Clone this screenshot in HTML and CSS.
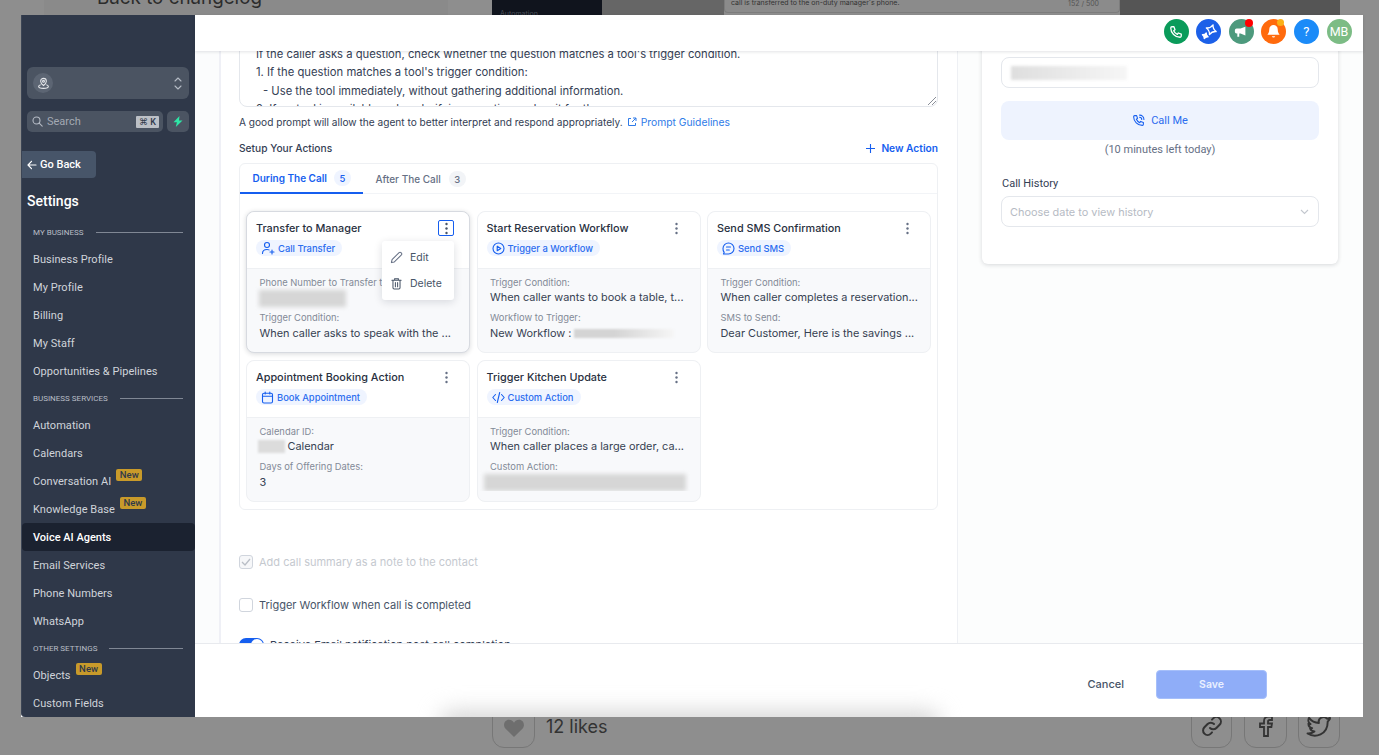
FILE: index.html
```html
<!DOCTYPE html>
<html lang="en">
<head>
<meta charset="utf-8">
<title>Voice AI Agents</title>
<link rel="stylesheet" href="styles.css">
</head>
<body>
<div class="bg">
  <div class="bg-a"></div>
  <div class="bg-img"><span>Automation</span></div>
  <div class="bg-b"></div>
  <div class="bg-c"><span>call is transferred to the on-duty manager's phone.</span><em>152 / 500</em></div>
  <div class="bg-d"></div>
  <div class="bg-back">Back to changelog</div>
  <div class="bg-btn bg-like"><svg width="22" height="20" viewBox="0 0 24 22"><path d="M12 21 2.5 11.5C-.5 8 1.5 2 6.5 2c2.500 0 4.300 1.300 5.500 3.200C13.200 3.300 15 2 17.500 2c5 0 7 6 4 9.500z" fill="#6e6e6e"/></svg></div>
  <div class="bg-likes">12 likes</div>
  <div class="bg-btn bg-s1"><svg width="24" height="24" viewBox="0 0 24 24" fill="none" stroke="#333" stroke-width="2" stroke-linecap="round"><path d="M10 14a4.500 4.500 0 0 0 6.400 0l3.200-3.200a4.500 4.500 0 0 0-6.400-6.400l-1.200 1.200"/><path d="M14 10a4.500 4.500 0 0 0-6.400 0l-3.200 3.200a4.500 4.500 0 0 0 6.400 6.400l1.200-1.200"/></svg></div>
  <div class="bg-btn bg-s2"><svg width="16" height="24" viewBox="0 0 16 24" fill="none" stroke="#333" stroke-width="1.800"><path d="M6 22v-9H2V9.500h4V7c0-3 1.800-4.500 4.500-4.500H14V6h-2.300C10.500 6 10 6.600 10 7.700v1.800h4l-.6 3.500H10v9z"/></svg></div>
  <div class="bg-btn bg-s3"><svg width="28" height="24" viewBox="0 0 24 22" fill="none" stroke="#333" stroke-width="1.800" stroke-linejoin="round"><path d="M22 3.500c-1 .5-1.800.7-2.700.8a4.300 4.300 0 0 0-7.400 3.900C8.300 8 5 6.300 2.900 3.500c-1.200 2-.6 4.600 1.300 5.800-.7 0-1.300-.2-1.900-.5 0 2 1.400 3.800 3.400 4.200-.6.200-1.300.2-1.900.1.500 1.700 2.100 2.900 4 3-1.800 1.400-4 2-6.300 1.800 7 4.300 18.500 1.500 18.500-11 .9-.7 1.500-1.400 2-2.400z"/></svg></div>
</div>

<div class="window">
  <aside class="sidebar">
    <div class="switcher">
      <span class="loc"><svg width="13" height="13" viewBox="0 0 16 16" fill="none" stroke="#e5e7eb" stroke-width="1.300"><path d="M8 10.500S4.500 7.800 4.500 5.200a3.500 3.500 0 0 1 7 0C11.500 7.800 8 10.500 8 10.500z"/><circle cx="8" cy="5.200" r="1.200"/><path d="M4.500 9.500C3 10 2 10.800 2 11.700 2 13 4.700 14 8 14s6-1 6-2.300c0-.9-1-1.700-2.500-2.200"/></svg></span>
      <svg class="updown" width="8" height="13" viewBox="0 0 8 13" fill="none" stroke="#b4bac4" stroke-width="1.100" stroke-linecap="round" stroke-linejoin="round"><path d="M1 4l3-3 3 3M1 9l3 3 3-3"/></svg>
    </div>
    <div class="search-row">
      <div class="search">
        <svg width="11" height="11" viewBox="0 0 11 11" fill="none" stroke="#b4bac4" stroke-width="1.100" stroke-linecap="round"><circle cx="4.500" cy="4.500" r="3.500"/><path d="M7.200 7.200 10.200 10.200"/></svg>
        <span class="search-text">Search</span>
        <span class="kbd">⌘ K</span>
      </div>
      <div class="bolt"><svg width="10" height="11" viewBox="0 0 10 11"><path d="M6.500 0 .5 6.200h3.400L2.800 11 9.500 4.500H6z" fill="#2ee6a6"/></svg></div>
    </div>
    <div class="goback"><svg width="10" height="10" viewBox="0 0 10 10" fill="none" stroke="#fff" stroke-width="1.200" stroke-linecap="round" stroke-linejoin="round"><path d="M9 5H1M4.500 1.300 1 5l3.500 3.700"/></svg>Go Back</div>
    <div class="settings">Settings</div>
    <div class="sec"><span>MY BUSINESS</span><i></i></div>
    <div class="item">Business Profile</div>
    <div class="item">My Profile</div>
    <div class="item">Billing</div>
    <div class="item">My Staff</div>
    <div class="item">Opportunities &amp; Pipelines</div>
    <div class="sec"><span>BUSINESS SERVICES</span><i></i></div>
    <div class="item">Automation</div>
    <div class="item">Calendars</div>
    <div class="item">Conversation AI<b class="new">New</b></div>
    <div class="item">Knowledge Base<b class="new">New</b></div>
    <div class="item active">Voice AI Agents</div>
    <div class="item">Email Services</div>
    <div class="item">Phone Numbers</div>
    <div class="item">WhatsApp</div>
    <div class="sec"><span>OTHER SETTINGS</span><i></i></div>
    <div class="item">Objects<b class="new">New</b></div>
    <div class="item">Custom Fields</div>
  </aside>

  <div class="main">
    <header class="topbar">
      <span class="tb tb-green"><svg width="14" height="14" viewBox="0 0 24 24" fill="none" stroke="#fff" stroke-width="2.200" stroke-linejoin="round"><path d="M5 3h3.500l1.800 5-2.300 1.700a13 13 0 0 0 6.300 6.300l1.700-2.300 5 1.800V19a2 2 0 0 1-2 2C10.500 21 3 13.500 3 5a2 2 0 0 1 2-2z"/></svg></span>
      <span class="tb tb-blue"><svg width="18" height="18" viewBox="0 0 24 24" fill="none" stroke="#fff" stroke-width="1.700" stroke-linejoin="round"><path d="M15 2Q16.500 7.500 22 9 16.500 10.500 15 16 13.500 10.500 8 9 13.500 7.500 15 2z" transform="rotate(20 15 9)"/><path d="M7 13Q7.800 16.200 11 17 7.800 17.800 7 21 6.200 17.800 3 17 6.200 16.200 7 13z" fill="#fff" transform="rotate(20 7 17)"/></svg></span>
      <span class="tb tb-teal"><svg width="14" height="14" viewBox="0 0 16 16"><path d="M13 2v10L7.500 9.800H6v3.700H3.800V9.800H3a2 2 0 0 1-2-2V6a2 2 0 0 1 2-2h4.500z" fill="#fff"/></svg><i class="dot dot-red"></i></span>
      <span class="tb tb-orange"><svg width="15" height="15" viewBox="0 0 16 16"><path d="M8 1a4.500 4.500 0 0 0-4.500 4.500c0 3.500-1.500 5-2 6h13c-.5-1-2-2.500-2-6A4.500 4.500 0 0 0 8 1z" fill="#fff"/><path d="M6.200 13a1.900 1.900 0 0 0 3.600 0z" fill="#fff"/></svg><i class="dot dot-amber"></i></span>
      <span class="tb tb-help">?</span>
      <span class="tb tb-user">MB</span>
    </header>

    <div class="body">
      <div class="gutter"></div>
      <section class="left">
        <div class="prompt">
          <p>If the caller asks a question, check whether the question matches a tool's trigger condition.</p>
          <p>1. If the question matches a tool's trigger condition:</p>
          <p class="indent">- Use the tool immediately, without gathering additional information.</p>
          <p>2. If no tool is available, ask a clarifying question and wait for the response.</p>
          <svg class="grip" width="8" height="8" viewBox="0 0 8 8" stroke="#8a8f98" stroke-width="1"><path d="M8 0 0 8M8 4 4 8"/></svg>
        </div>
        <p class="hint">A good prompt will allow the agent to better interpret and respond appropriately.<span class="guide"><svg width="10" height="10" viewBox="0 0 10 10" fill="none" stroke="#2f7be8" stroke-width="1"><path d="M4 1.500H1.500v7h7V6M6 1h3v3M9 1 5 5"/></svg>Prompt Guidelines</span></p>
        <div class="setup"><span>Setup Your Actions</span><span class="newact"><svg width="9" height="9" viewBox="0 0 9 9" stroke="#155eef" stroke-width="1.100"><path d="M4.500 0v9M0 4.500h9"/></svg>New Action</span></div>

        <div class="tabs">
          <div class="tabhead">
            <div class="tab on">During The Call<span class="count">5</span></div>
            <div class="tab">After The Call<span class="count">3</span></div>
          </div>
          <div class="grid">
            <article class="card selected">
              <div class="chead">
                <div class="ctop"><span class="ctitle">Transfer to Manager</span><span class="kebab focus"><svg width="3" height="13" viewBox="0 0 3 13" fill="#475467"><circle cx="1.500" cy="2" r="1.200"/><circle cx="1.500" cy="6.500" r="1.200"/><circle cx="1.500" cy="11" r="1.200"/></svg></span></div>
                <span class="pill"><svg width="14" height="14" viewBox="0 0 14 14" fill="none" stroke="#155eef" stroke-width="1.100" stroke-linecap="round"><circle cx="6" cy="4" r="2.500"/><path d="M1.500 12.500c0-2.500 2-4 4.500-4 .8 0 1.500.1 2 .4M11 9v4M9 11h4"/></svg>Call Transfer</span>
              </div>
              <div class="cbody">
                <label>Phone Number to Transfer to</label>
                <div class="smudge s-phone"></div>
                <label class="second">Trigger Condition:</label>
                <div class="val">When caller asks to speak with the ...</div>
              </div>
              <div class="menu">
                <div class="mi"><svg width="13" height="13" viewBox="0 0 14 14" fill="none" stroke="#667085" stroke-width="1.100" stroke-linejoin="round"><path d="M1.500 12.500l.7-3.200 7.600-7.600a1.400 1.400 0 0 1 2 0l.5.500a1.400 1.400 0 0 1 0 2l-7.600 7.600z"/></svg>Edit</div>
                <div class="mi"><svg width="13" height="13" viewBox="0 0 14 14" fill="none" stroke="#475467" stroke-width="1.100" stroke-linecap="round"><path d="M2 3.500h10M5 3.500V2h4v1.500M3.200 3.500v8a1.300 1.300 0 0 0 1.300 1.300h5a1.300 1.300 0 0 0 1.300-1.300v-8M5.800 6v4.500M8.200 6v4.500"/></svg>Delete</div>
              </div>
            </article>

            <article class="card">
              <div class="chead">
                <div class="ctop"><span class="ctitle">Start Reservation Workflow</span><span class="kebab"><svg width="3" height="13" viewBox="0 0 3 13" fill="#667085"><circle cx="1.500" cy="2" r="1.200"/><circle cx="1.500" cy="6.500" r="1.200"/><circle cx="1.500" cy="11" r="1.200"/></svg></span></div>
                <span class="pill"><svg width="13" height="13" viewBox="0 0 13 13" fill="none" stroke="#155eef" stroke-width="1.100" stroke-linejoin="round"><circle cx="6.500" cy="6.500" r="5.500"/><path d="M5.200 4.200v4.600l3.600-2.300z"/></svg>Trigger a Workflow</span>
              </div>
              <div class="cbody">
                <label>Trigger Condition:</label>
                <div class="val">When caller wants to book a table, t...</div>
                <label class="second">Workflow to Trigger:</label>
                <div class="val vflex">New Workflow :<span class="smudge s-flow"></span></div>
              </div>
            </article>

            <article class="card">
              <div class="chead">
                <div class="ctop"><span class="ctitle">Send SMS Confirmation</span><span class="kebab"><svg width="3" height="13" viewBox="0 0 3 13" fill="#667085"><circle cx="1.500" cy="2" r="1.200"/><circle cx="1.500" cy="6.500" r="1.200"/><circle cx="1.500" cy="11" r="1.200"/></svg></span></div>
                <span class="pill"><svg width="13" height="13" viewBox="0 0 13 13" fill="none" stroke="#155eef" stroke-width="1.100" stroke-linecap="round" stroke-linejoin="round"><path d="M1 6.500a5.500 5.500 0 1 1 5.500 5.500H1.500l.7-1.700A5.400 5.400 0 0 1 1 6.500zM4.500 5h4M4.500 8h2.800"/></svg>Send SMS</span>
              </div>
              <div class="cbody">
                <label>Trigger Condition:</label>
                <div class="val">When caller completes a reservation...</div>
                <label class="second">SMS to Send:</label>
                <div class="val">Dear Customer, Here is the savings ...</div>
              </div>
            </article>

            <article class="card">
              <div class="chead">
                <div class="ctop"><span class="ctitle">Appointment Booking Action</span><span class="kebab"><svg width="3" height="13" viewBox="0 0 3 13" fill="#667085"><circle cx="1.500" cy="2" r="1.200"/><circle cx="1.500" cy="6.500" r="1.200"/><circle cx="1.500" cy="11" r="1.200"/></svg></span></div>
                <span class="pill"><svg width="13" height="13" viewBox="0 0 13 13" fill="none" stroke="#155eef" stroke-width="1.100" stroke-linecap="round"><rect x="1.500" y="2.200" width="10" height="9.800" rx="1.500"/><path d="M1.500 5.200h10M4.200 1v2M8.800 1v2"/></svg>Book Appointment</span>
              </div>
              <div class="cbody">
                <label>Calendar ID:</label>
                <div class="val vflex"><span class="smudge s-cal"></span>Calendar</div>
                <label class="second">Days of Offering Dates:</label>
                <div class="val">3</div>
              </div>
            </article>

            <article class="card">
              <div class="chead">
                <div class="ctop"><span class="ctitle">Trigger Kitchen Update</span><span class="kebab"><svg width="3" height="13" viewBox="0 0 3 13" fill="#667085"><circle cx="1.500" cy="2" r="1.200"/><circle cx="1.500" cy="6.500" r="1.200"/><circle cx="1.500" cy="11" r="1.200"/></svg></span></div>
                <span class="pill"><svg width="13" height="13" viewBox="0 0 13 13" fill="none" stroke="#155eef" stroke-width="1.100" stroke-linecap="round" stroke-linejoin="round"><path d="M3.500 3.500.8 6.500l2.700 3M9.500 3.500l2.700 3-2.700 3M7.700 1.500l-2.400 10"/></svg>Custom Action</span>
              </div>
              <div class="cbody">
                <label>Trigger Condition:</label>
                <div class="val">When caller places a large order, ca...</div>
                <label class="second">Custom Action:</label>
                <div class="smudge s-custom"></div>
              </div>
            </article>
          </div>
        </div>

        <div class="check disabled"><span class="box"><svg width="10" height="8" viewBox="0 0 10 8" fill="none" stroke="#b9bec6" stroke-width="1.300"><path d="M1 4l3 3 5-6"/></svg></span>Add call summary as a note to the contact</div>
        <div class="check trigger"><span class="box"></span>Trigger Workflow when call is completed</div>
        <div class="check notif"><span class="toggle"><i></i></span>Receive Email notification post call completion</div>
      </section>

      <section class="right">
        <div class="rcard">
          <div class="field"><span class="smudge s-input"></span></div>
          <div class="callme"><svg width="13" height="13" viewBox="0 0 24 24" fill="none" stroke="#155eef" stroke-width="2" stroke-linejoin="round" stroke-linecap="round"><path d="M5 3h3.500l1.800 5-2.300 1.700a13 13 0 0 0 6.300 6.300l1.700-2.300 5 1.800V19a2 2 0 0 1-2 2C10.500 21 3 13.500 3 5a2 2 0 0 1 2-2z"/><path d="M14 2a8 8 0 0 1 8 8M14 6a4 4 0 0 1 4 4"/></svg>Call Me</div>
          <div class="left-time">(10 minutes left today)</div>
          <div class="hist">Call History</div>
          <div class="select"><span>Choose date to view history</span><svg width="9" height="6" viewBox="0 0 9 6" fill="none" stroke="#c3c7ce" stroke-width="1.100"><path d="M1 1l3.500 3.500L8 1"/></svg></div>
        </div>
      </section>
    </div>

    <footer class="footer">
      <div class="glow"></div>
      <span class="cancel">Cancel</span>
      <span class="save">Save</span>
    </footer>
  </div>
</div>
</body>
</html>
```
FILE: styles.css
```css
* { box-sizing: border-box; }
html, body { margin: 0; height: 100%; }
body { width: 1379px; height: 755px; overflow: hidden; background: #8e8e8e; font-family: Inter, "Liberation Sans", sans-serif; position: relative; }
p { margin: 0; }

/* dimmed page behind the modal */
.bg > div { position: absolute; }
.bg-a { left: 44px; top: 0; width: 404px; height: 15px; background: #8a8a8a; }
.bg-img { left: 492px; top: 0; width: 110px; height: 15px; background: #10141d; overflow: hidden; }
.bg-img span { position: absolute; left: 8px; top: 9px; font-size: 7px; color: #4a4f59; }
.bg-b { left: 602px; top: 0; width: 122px; height: 15px; background: #666; }
.bg-c { left: 724px; top: 0; width: 396px; height: 13px; background: #8b8b8b; border: 1px solid #7c7c7c; border-top: 0; border-radius: 0 0 4px 4px; font-size: 7px; color: #333; overflow: hidden; padding-left: 6px; }
.bg-c span { position: relative; top: -2px; }
.bg-c em { position: absolute; right: 20px; top: -1px; font-style: normal; color: #555; }
.bg-d { left: 1120px; top: 0; width: 220px; height: 15px; background: #555; }
.bg-back { left: 97px; top: -12px; font-size: 18.800px; line-height: 20px; color: #2c2c2c; }
.bg-btn { top: 700px; height: 48px; border: 1px solid #777; border-radius: 12px; display: flex; align-items: flex-end; justify-content: center; padding-bottom: 9px; }
.bg-like { left: 492px; width: 43px; }
.bg-s1 { left: 1191px; width: 41px; }
.bg-s2 { left: 1244px; width: 43px; }
.bg-s3 { left: 1298px; width: 42px; }
.bg-likes { left: 546px; top: 716px; font-size: 18px; line-height: 22px; color: #333; }

/* modal window */
.window { position: absolute; left: 21px; top: 15px; width: 1342px; height: 702px; display: flex; background: #fff; }
.sidebar { width: 174px; flex: none; background: #2f3849; padding-top: 52px; color: #d0d4da; font-family: Roboto, "Liberation Sans", sans-serif; overflow: hidden; border-left: 1px solid #3c4555; border-radius: 0 0 0 4px; }
.switcher { margin: 0 6px 0 5px; height: 32px; background: #4b5462; border-radius: 6px; display: flex; align-items: center; justify-content: space-between; padding: 0 7px 0 6px; }
.loc { width: 20px; height: 20px; border-radius: 50%; background: #5c6573; display: flex; align-items: center; justify-content: center; }
.search-row { display: flex; gap: 4px; margin: 12px 6px 0 5px; height: 21px; }
.search { flex: 1; background: #4b5462; border-radius: 5px; display: flex; align-items: center; padding: 0 4px 0 5px; }
.search-text { flex: 1; margin-left: 4px; font-size: 11px; color: #a3a9b3; }
.kbd { background: #bcc0c6; color: #2f3849; font-size: 9px; font-weight: 500; line-height: 12px; padding: 0 2px; border-radius: 1px; width: 23px; text-align: center; white-space: nowrap; }
.bolt { width: 22px; background: #4b5462; border-radius: 5px; display: flex; align-items: center; justify-content: center; }
.goback { margin-top: 19px; width: 74px; height: 27px; background: #475569; border-radius: 0 4px 4px 0; display: flex; align-items: center; gap: 3px; padding-left: 5px; font-size: 11px; font-weight: 500; color: #fff; }
.settings { margin: 13px 0 8px 5px; font-size: 14px; line-height: 20px; font-weight: 500; color: #fff; }
.sec { height: 26px; padding: 0 12px 0 11px; display: flex; align-items: center; gap: 12px; font-size: 8px; color: #b9bec6; white-space: nowrap; }
.sec i { flex: 1; height: 1px; background: #808794; }
.item { height: 28px; padding-left: 11px; display: flex; align-items: center; font-size: 11px; font-weight: 400; letter-spacing: .05px; color: #d0d4da; white-space: nowrap; border-radius: 4px; }
.item.active { background: #1b2230; color: #fff; font-weight: 500; letter-spacing: 0; }
.new { align-self: flex-start; margin: 2px 0 0 5px; background: #c89a2a; color: #2f3849; font-size: 9.500px; font-weight: 500; line-height: 12px; height: 12px; padding: 0 3.500px; border-radius: 2px; }

.main { flex: 1; min-width: 0; display: flex; flex-direction: column; position: relative; }
.topbar { height: 36px; flex: none; background: #fff; box-shadow: 0 1px 3px rgba(16, 24, 40, .12); position: relative; z-index: 2; display: flex; align-items: center; justify-content: flex-end; gap: 7.600px; padding: 0 11.500px 3px 0; }
.tb { width: 25px; height: 25px; border-radius: 50%; display: flex; align-items: center; justify-content: center; color: #fff; font-family: Roboto, "Liberation Sans", sans-serif; font-size: 12px; position: relative; }
.tb-green { background: #0a9b5a; }
.tb-blue { background: #1c60e8; }
.tb-teal { background: #4d9a7d; }
.tb-orange { background: #ff6a0d; }
.tb-help { background: #1b8bf8; font-weight: 400; font-size: 13px; }
.tb-user { background: #7cbc85; font-size: 12.500px; }
.dot { position: absolute; top: 0; right: 1px; width: 8px; height: 8px; border-radius: 50%; }
.dot-red { background: #f00; }
.dot-amber { background: #fbb016; width: 7px; height: 7px; right: 2px; }

.body { flex: 1; min-height: 0; display: flex; overflow: hidden; }
.gutter { width: 24px; flex: none; background: #fbfcfd; }
.left { width: 739px; flex: none; background: #fff; border-left: 2px solid #eff0f6; border-right: 1px solid #eef0f4; padding: 0 19px 0 18px; }
.right { flex: 1; background: #fcfdfd; padding: 0 25px 0 24px; }

.prompt { position: relative; height: 86px; margin-top: -30px; padding: 23px 16px 0; border: 1px solid #e4e7ec; border-radius: 8px; overflow: hidden; color: #344054; font-size: 11.250px; line-height: 18.400px; background: #fff; white-space: nowrap; }
.indent { padding-left: 7px; }
.grip { position: absolute; right: 1px; bottom: 1px; }
.hint { margin-top: 7px; height: 16px; font-size: 10.150px; line-height: 16px; color: #344054; white-space: nowrap; }
.guide { margin-left: 4px; font-size: 10.300px; color: #2f7be8; display: inline-flex; align-items: center; gap: 4px; vertical-align: top; }
.setup { margin-top: 8px; height: 20px; display: flex; align-items: center; justify-content: space-between; font-size: 10.200px; font-weight: 500; color: #344054; }
.newact { display: flex; align-items: center; gap: 6px; color: #155eef; font-weight: 600; }

.tabs { margin-top: 5px; height: 347px; border: 1px solid #eef0f3; border-radius: 6px; }
.tabhead { height: 30px; display: flex; border-bottom: 1px solid #f2f4f7; }
.tab { height: 30px; padding: 0 12px 0 12.500px; display: flex; align-items: center; gap: 8px; font-size: 10px; font-weight: 500; color: #667085; white-space: nowrap; }
.tab.on { gap: 7px; color: #155eef; font-weight: 600; border-bottom: 2px solid #155eef; }
.count { width: 17px; height: 16px; border-radius: 8px; background: #f2f4f7; color: #667085; font-size: 9.500px; font-weight: 500; display: flex; align-items: center; justify-content: center; }
.on .count { background: #eff4ff; color: #155eef; }
.grid { display: grid; grid-template-columns: 224px 224px 224px; grid-auto-rows: 142px; column-gap: 6.500px; row-gap: 7px; padding: 17px 0 0 6px; }
.card { position: relative; border: 1px solid #eef0f3; border-radius: 8px; display: flex; flex-direction: column; background: #f8f9fb; }
.card.selected { border-color: #d7dae0; box-shadow: 0 1px 5px rgba(16, 24, 40, .16); z-index: 1; }
.chead { height: 57px; flex: none; background: #fff; border-radius: 8px 8px 0 0; border-bottom: 1px solid #eef0f3; padding: 7px 9px 0; }
.ctop { height: 18px; display: flex; align-items: center; justify-content: space-between; }
.ctitle { font-size: 10.850px; font-weight: 500; color: #283040; white-space: nowrap; }
.kebab { width: 16px; height: 16px; margin-right: 6px; display: flex; align-items: center; justify-content: center; border: 1.500px solid transparent; border-radius: 2px; }
.kebab.focus { border-color: #155eef; }
.pill { margin-top: 3px; display: inline-flex; align-items: center; gap: 3px; height: 16px; padding: 0 7px 0 5px; background: #eff4ff; border-radius: 8px; color: #2b6cef; font-size: 9.400px; font-weight: 500; white-space: nowrap; }
.cbody { padding: 6px 9px 0 12.500px; overflow: hidden; }
.cbody label { display: block; font-size: 9.400px; line-height: 15px; color: #838a97; white-space: nowrap; }
.cbody label.second { margin-top: 5px; }
.second + .val { margin-top: 1px; }
.val { font-size: 10.900px; line-height: 15px; color: #364152; white-space: nowrap; }
.vflex { display: flex; align-items: center; gap: 3px; }
.smudge { display: block; background: #d6d6d6; filter: blur(2px); }
.s-phone { width: 87px; height: 17px; margin: 0 0 -2px -1px; }
.s-flow { width: 100px; height: 9px; background: linear-gradient(90deg, #d4d4d4 40%, #f6f6f6); filter: blur(1px); }
.s-cal { width: 27px; height: 13px; margin-left: -2px; background: #dcdcdc; filter: blur(1px); }
.s-custom { width: 202px; height: 17px; margin-left: -6px; }
.s-input { width: 116px; height: 14px; background: linear-gradient(90deg, #dedede, #f6f6f6); filter: blur(1.500px); }
.menu { position: absolute; left: 135px; top: 29px; width: 72px; height: 59px; padding-top: 3px; background: #fff; border-radius: 3px; box-shadow: 0 2px 8px rgba(16, 24, 40, .14); z-index: 3; }
.mi { height: 26.500px; display: flex; align-items: center; gap: 7px; padding-left: 8px; font-size: 10.500px; color: #475467; }

.check { display: flex; align-items: center; gap: 6px; font-size: 11px; color: #475467; white-space: nowrap; }
.check.disabled { margin-top: 45px; height: 14px; color: #c5c9cf; }
.check.trigger { margin-top: 29px; height: 14px; }
.check.notif { margin-top: 26px; height: 14px; color: #344054; }
.box { width: 14px; height: 14px; border: 1px solid #d0d5dd; border-radius: 3px; background: #fff; display: flex; align-items: center; justify-content: center; }
.disabled .box { background: #f6f7f9; }
.toggle { width: 25px; height: 14px; border-radius: 7px; background: #155eef; position: relative; }
.toggle i { position: absolute; right: 1px; top: 1px; width: 12px; height: 12px; border-radius: 50%; background: #fff; }

.rcard { width: 356px; height: 229px; margin-top: -16px; padding: 22px 19px 0 19px; background: #fff; border-radius: 6px; box-shadow: 0 1px 4px rgba(16, 24, 40, .16); }
.field { height: 31px; border: 1px solid #e4e7ec; border-radius: 8px; display: flex; align-items: center; padding-left: 9px; }
.callme { margin-top: 13px; height: 39px; background: #eef3fe; border-radius: 8px; display: flex; align-items: center; justify-content: center; gap: 6px; font-family: Roboto, "Liberation Sans", sans-serif; font-size: 11px; font-weight: 400; color: #2b6cef; }
.left-time { margin-top: 2px; height: 16px; line-height: 16px; text-align: center; font-family: Roboto, "Liberation Sans", sans-serif; font-size: 11px; color: #667085; }
.hist { margin: 18px 0 0 1px; height: 16px; line-height: 16px; font-family: Roboto, "Liberation Sans", sans-serif; font-size: 11px; color: #344054; }
.select { margin-top: 4px; height: 31px; border: 1px solid #e4e7ec; border-radius: 8px; display: flex; align-items: center; justify-content: space-between; padding: 0 9px 0 8px; font-size: 10.900px; color: #b6bbc4; }

.footer { height: 74px; flex: none; background: #fff; border-top: 1px solid #e8eaee; display: flex; align-items: center; justify-content: flex-end; padding: 7px 96px 0 0; position: relative; overflow: hidden; }
.glow { position: absolute; left: 245px; top: 68px; width: 500px; height: 24px; background: #d2d2d2; filter: blur(11px); border-radius: 12px; }
.cancel { position: relative; font-size: 11px; font-weight: 500; color: #475467; margin-right: 32px; }
.save { position: relative; width: 111px; height: 29px; background: #8fadf8; border: 1px solid #a6bffa; border-radius: 4px; color: #eaf0ff; display: flex; align-items: center; justify-content: center; font-size: 10.500px; font-weight: 600; }
```
